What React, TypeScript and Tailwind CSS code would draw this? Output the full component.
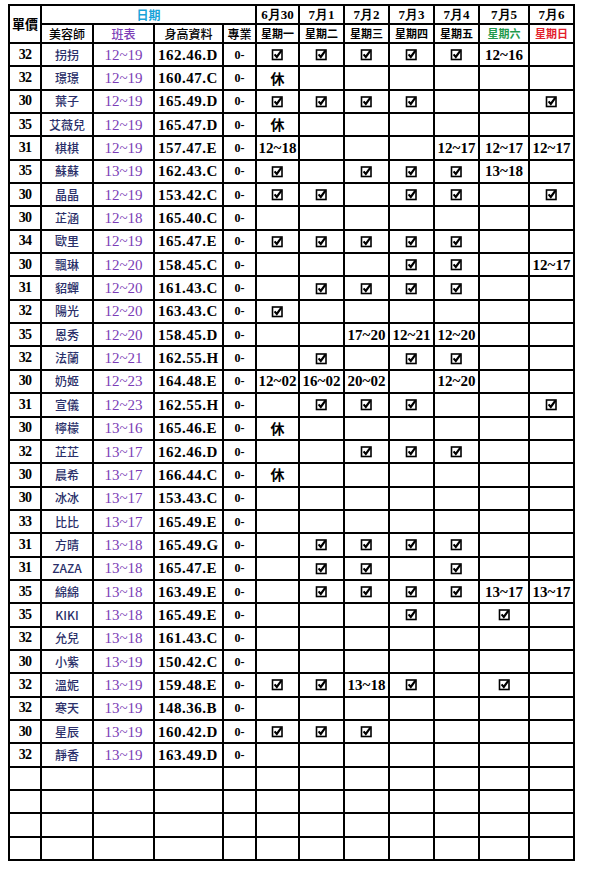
import React from 'react';

const cjk = '"Noto Sans CJK TC", "Noto Sans CJK SC", sans-serif';

type Row = [string, string, string, string, string[]];

// v = checked, 休 = day off, otherwise shift hours
const rows: Row[] = [
  ['32', '拐拐', '12~19', '162.46.D', ['v', 'v', 'v', 'v', 'v', '12~16', '']],
  ['32', '璟璟', '12~19', '160.47.C', ['休', '', '', '', '', '', '']],
  ['30', '葉子', '12~19', '165.49.D', ['v', 'v', 'v', 'v', '', '', 'v']],
  ['35', '艾薇兒', '12~19', '165.47.D', ['休', '', '', '', '', '', '']],
  ['31', '棋棋', '12~19', '157.47.E', ['12~18', '', '', '', '12~17', '12~17', '12~17']],
  ['35', '蘇蘇', '13~19', '162.43.C', ['v', '', 'v', 'v', 'v', '13~18', '']],
  ['30', '晶晶', '12~19', '153.42.C', ['v', 'v', '', 'v', 'v', '', 'v']],
  ['30', '芷涵', '12~18', '165.40.C', ['', '', '', '', '', '', '']],
  ['34', '歐里', '12~19', '165.47.E', ['v', 'v', 'v', 'v', 'v', '', '']],
  ['30', '飄琳', '12~20', '158.45.C', ['', '', '', 'v', 'v', '', '12~17']],
  ['31', '貂蟬', '12~20', '161.43.C', ['', 'v', 'v', 'v', 'v', '', '']],
  ['32', '陽光', '12~20', '163.43.C', ['v', '', '', '', '', '', '']],
  ['35', '恩秀', '12~20', '158.45.D', ['', '', '17~20', '12~21', '12~20', '', '']],
  ['32', '法蘭', '12~21', '162.55.H', ['', 'v', '', 'v', 'v', '', '']],
  ['30', '奶姬', '12~23', '164.48.E', ['12~02', '16~02', '20~02', '', '12~20', '', '']],
  ['31', '宣儀', '12~23', '162.55.H', ['', 'v', 'v', 'v', '', '', 'v']],
  ['30', '檸檬', '13~16', '165.46.E', ['休', '', '', '', '', '', '']],
  ['32', '芷芷', '13~17', '162.46.D', ['', '', 'v', 'v', 'v', '', '']],
  ['30', '晨希', '13~17', '166.44.C', ['休', '', '', '', '', '', '']],
  ['30', '冰冰', '13~17', '153.43.C', ['', '', '', '', '', '', '']],
  ['33', '比比', '13~17', '165.49.E', ['', '', '', '', '', '', '']],
  ['31', '方晴', '13~18', '165.49.G', ['', 'v', 'v', 'v', 'v', '', '']],
  ['31', 'ZAZA', '13~18', '165.47.E', ['', 'v', 'v', '', 'v', '', '']],
  ['35', '綿綿', '13~18', '163.49.E', ['', 'v', 'v', 'v', 'v', '13~17', '13~17']],
  ['35', 'KIKI', '13~18', '165.49.E', ['', '', '', 'v', '', 'v', '']],
  ['32', '允兒', '13~18', '161.43.C', ['', '', '', '', '', '', '']],
  ['30', '小紫', '13~19', '150.42.C', ['', '', '', '', '', '', '']],
  ['32', '溫妮', '13~19', '159.48.E', ['v', 'v', '13~18', 'v', '', 'v', '']],
  ['32', '寒天', '13~19', '148.36.B', ['', '', '', '', '', '', '']],
  ['30', '星辰', '13~19', '160.42.D', ['v', 'v', 'v', '', '', '', '']],
  ['32', '靜香', '13~19', '163.49.D', ['', '', '', '', '', '', '']],
];

const dates = ['6月30', '7月1', '7月2', '7月3', '7月4', '7月5', '7月6'];
const weekdays = ['星期一', '星期二', '星期三', '星期四', '星期五', '星期六', '星期日'];

function Check() {
  return (
    <svg width="13" height="13" viewBox="0 0 13 13" className="mx-auto block">
      <rect x="1.5" y="2" width="9.5" height="9.5" fill="none" stroke="#000" strokeWidth="1.6" />
      <path d="M3.6 6.4 L5.8 9 L10.4 2.6" fill="none" stroke="#000" strokeWidth="2.2" />
    </svg>
  );
}

function DayCell({ value }: { value: string }) {
  return (
    <td className="border-2 border-black text-center p-0 align-middle">
      {value === 'v' ? (
        <Check />
      ) : value === '休' ? (
        <span className="text-[14px] font-bold text-black" style={{ fontFamily: cjk }}>休</span>
      ) : (
        <span className="text-[15px] font-bold text-black">{value}</span>
      )}
    </td>
  );
}

export default function App() {
  const empty = Array.from({ length: 4 });
  return (
    <div className="w-[590px] h-[870px] bg-white pt-[4px] pl-[8px] overflow-hidden">
      <table className="border-collapse table-fixed w-[565px] leading-[16px] font-['Liberation_Serif',serif]">
        <colgroup>
          <col className="w-[32px]" />
          <col className="w-[52px]" />
          <col className="w-[61px]" />
          <col className="w-[69px]" />
          <col className="w-[33px]" />
          <col className="w-[43px]" />
          <col className="w-[45px]" />
          <col className="w-[45px]" />
          <col className="w-[45px]" />
          <col className="w-[45px]" />
          <col className="w-[50px]" />
          <col className="w-[45px]" />
        </colgroup>
        <thead>
          <tr className="h-[19px]">
            <th rowSpan={2} className="border-2 border-black p-0 text-[13px] font-bold text-black" style={{ fontFamily: cjk }}>
              單價
            </th>
            <th colSpan={4} className="border-2 border-black p-0 text-[12px] font-bold text-[#1aa3d8] leading-none" style={{ fontFamily: cjk }}>
              日期
            </th>
            {dates.map((d) => (
              <th key={d} className="border-2 border-black p-0 text-[13px] font-bold text-black leading-none">
                {d}
              </th>
            ))}
          </tr>
          <tr className="h-[19px]">
            <th className="border-2 border-black p-0 text-[12px] font-medium text-black leading-none" style={{ fontFamily: cjk }}>
              美容師
            </th>
            <th className="border-2 border-black p-0 text-[12px] font-medium text-[#7b3db6] leading-none" style={{ fontFamily: cjk }}>
              班表
            </th>
            <th className="border-2 border-black p-0 text-[12px] font-medium text-black leading-none" style={{ fontFamily: cjk }}>
              身高資料
            </th>
            <th className="border-2 border-black p-0 text-[12px] font-medium text-black leading-none" style={{ fontFamily: cjk }}>
              專業
            </th>
            {weekdays.map((w, i) => (
              <th
                key={w}
                className={
                  'border-2 border-black p-0 text-[11px] font-bold leading-none ' +
                  (i === 5 ? 'text-[#1f9a4c]' : i === 6 ? 'text-[#e3202c]' : 'text-black')
                }
                style={{ fontFamily: cjk }}
              >
                {w}
              </th>
            ))}
          </tr>
        </thead>
        <tbody>
          {rows.map(([price, name, shift, body, days], idx) => (
            <tr key={idx} className="h-[23.35px]">
              <td className="border-2 border-black p-0 text-center text-[14px] font-bold text-black tracking-tighter">
                {price}
              </td>
              <td
                className="border-2 border-black p-0 text-center text-[12px] font-medium text-[#2a2f6a]"
                style={{ fontFamily: cjk }}
              >
                {name}
              </td>
              <td className="border-2 border-black p-0 text-center text-[15px] text-[#7b3db6]">{shift}</td>
              <td className="border-2 border-black p-0 pl-[3px] text-left text-[15px] font-bold text-black tracking-[0.5px]">
                {body}
              </td>
              <td className="border-2 border-black p-0 text-center text-[12px] font-bold text-black">0-</td>
              {days.map((d, j) => (
                <DayCell key={j} value={d} />
              ))}
            </tr>
          ))}
          {empty.map((_, idx) => (
            <tr key={'e' + idx} className="h-[23.35px]">
              {Array.from({ length: 12 }).map((__, j) => (
                <td key={j} className="border-2 border-black p-0" />
              ))}
            </tr>
          ))}
        </tbody>
      </table>
    </div>
  );
}
